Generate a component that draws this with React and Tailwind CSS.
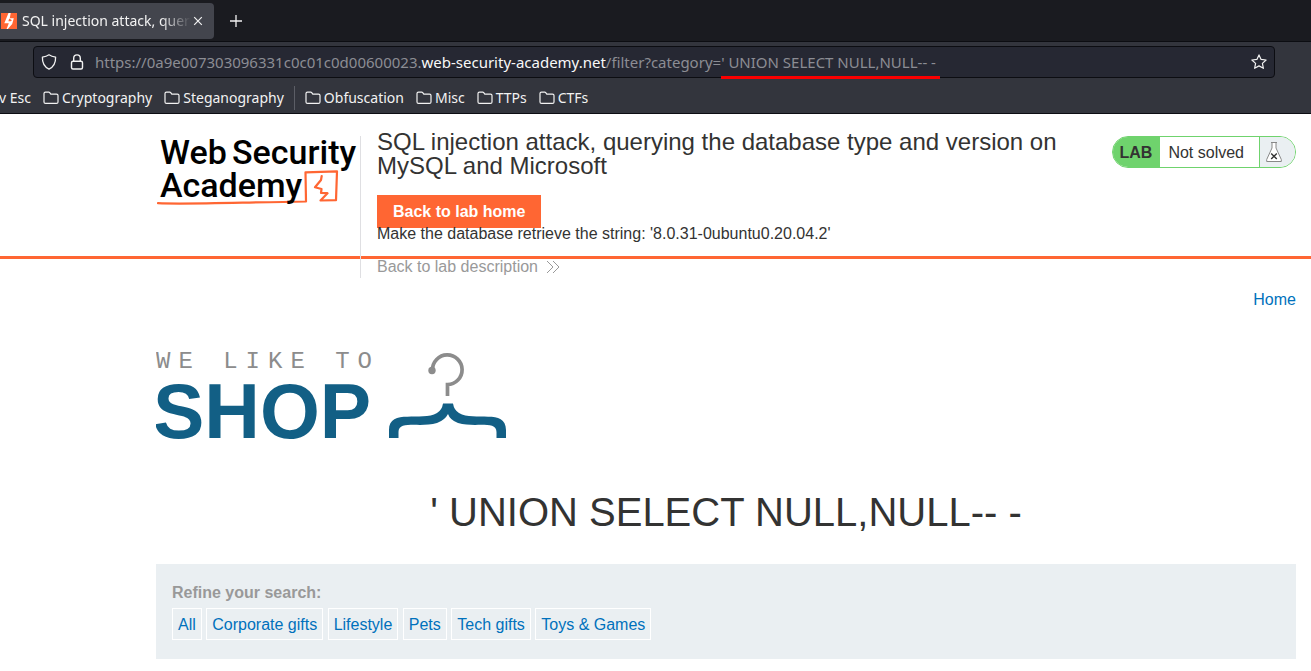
import React from 'react';

const folders = ['Cryptography', 'Steganography'];
const moreFolders = ['Obfuscation', 'Misc', 'TTPs', 'CTFs'];
const categories = ['All', 'Corporate gifts', 'Lifestyle', 'Pets', 'Tech gifts', 'Toys & Games'];
const urlHost = 'https://0a9e007303096331c0c01c0d00600023.';
const urlDomain = 'web-security-academy.net';
const urlPath = '/filter?category=';
const urlQuery = "' UNION SELECT NULL,NULL-- -";

function Folder({ name }) {
  return (
    <a href="#" className="flex items-center gap-[3px]">
      <svg width="16" height="16" viewBox="0 0 16 16" fill="none" stroke="currentColor" strokeWidth="1.2" strokeLinejoin="round">
        <path d="M1 3.600q0-1.500 1.500-1.500h3.200q.6 0 1 .5l1.100 1.500h5.700q1.500 0 1.500 1.500v6.300q0 1.500-1.500 1.500H2.500q-1.500 0-1.500-1.500z" />
      </svg>
      {name}
    </a>
  );
}

function Browser() {
  return (
    <div className="bg-[#33353d] font-['Noto_Sans',sans-serif] text-[14px] text-[#f2f2f2]">
      <div className="flex h-[42px] items-center border-b border-[#0c0d12] bg-[#1a1b20]">
        <div className="flex h-9 w-[214px] items-center rounded-r-[4px] bg-[#43454d]">
          <svg className="ml-px shrink-0" width="16" height="16" viewBox="0 0 16 16">
            <path fill="#ff6633" d="M0 0h16v16H0z" />
            <path fill="#fff" d="M7.500 0h2.200L8.800 5.200h4L11.200 11 6.800 16H5.600l2.200-5.800H3.300z" />
            <path fill="#ff6633" d="M7.400 8.200l.8-2.600 2.800 1.600-1.400 1z" />
          </svg>
          <span className="ml-[5px] w-[169px] overflow-hidden whitespace-nowrap [mask-image:linear-gradient(to_right,black_82%,transparent)]">
            SQL injection attack, querying
          </span>
          <button aria-label="Close tab" className="ml-[2px]">
            <svg width="10" height="10" viewBox="0 0 10 10" stroke="currentColor" strokeWidth="1.2">
              <path d="M1.200 1.200l7.600 7.600M8.800 1.200L1.200 8.800" />
            </svg>
          </button>
        </div>
        <button aria-label="New tab" className="ml-4">
          <svg width="12" height="12" viewBox="0 0 12 12" stroke="currentColor" strokeWidth="1.3">
            <path d="M6 0v12M0 6h12" />
          </svg>
        </button>
      </div>
      <div className="pt-1 pr-9 pl-[33px]">
        <div className="flex h-8 items-center rounded-[4px] border border-[#0c0d12] bg-[#262833] px-[7px] text-[15px]">
          <svg width="16" height="16" viewBox="0 0 16 16" fill="none" stroke="currentColor" strokeWidth="1.3" strokeLinejoin="round">
            <path d="M8 .8c2 1.400 4.200 2 6.600 2.300.2 5.200-1.800 9.800-6.600 12.100C3.200 12.900 1.200 8.300 1.400 3.100 3.800 2.800 6 2.200 8 .8z" />
          </svg>
          <svg className="ml-3" width="16" height="16" viewBox="0 0 16 16" fill="none" stroke="currentColor" strokeWidth="1.4">
            <rect x="2.500" y="7.200" width="11" height="7.800" rx="1.500" />
            <path d="M4.700 7V4.200a3.300 3.300 0 0 1 6.600 0V7" />
          </svg>
          <div className="ml-[10px] grid flex-1 items-center">
            <input
              aria-label="Address"
              defaultValue={urlHost + urlDomain + urlPath + urlQuery}
              className="col-start-1 row-start-1 w-full bg-transparent text-transparent outline-none"
            />
            <div aria-hidden="true" className="pointer-events-none col-start-1 row-start-1 whitespace-nowrap text-[#8c8d94]">
              {urlHost}
              <span className="text-[#f8f8f8]">{urlDomain}</span>
              {urlPath}
              <span className="relative">
                {urlQuery}
                <span className="absolute top-[24px] -right-1 left-0 h-[3px] bg-[#fa0000]" />
              </span>
            </div>
          </div>
          <button aria-label="Bookmark this page">
            <svg width="16" height="16" viewBox="0 0 16 16" fill="none" stroke="currentColor" strokeWidth="1.2" strokeLinejoin="round">
              <path d="M8 .9l2.100 4.500 5 .6-3.700 3.400 1 4.900L8 11.900l-4.400 2.400 1-4.900L.9 6l5-.6z" />
            </svg>
          </button>
        </div>
      </div>
      <nav aria-label="Bookmarks" className="flex h-9 items-center gap-3 overflow-hidden border-b border-[#0c0d12] pt-1">
        <a href="#" className="-ml-px">v Esc</a>
        {folders.map((f) => <Folder key={f} name={f} />)}
        <span className="-mx-[2px] h-6 w-px bg-[#5c5e66]" />
        {moreFolders.map((f) => <Folder key={f} name={f} />)}
      </nav>
    </div>
  );
}

function AcademyLogo() {
  return (
    <svg width="204" height="76" viewBox="0 0 204 76" role="img" aria-label="Web Security Academy">
      <g fill="none" stroke="#ff6633" strokeWidth="2.200" strokeLinejoin="round" strokeLinecap="round">
        <path d="M2 67.200C30 68.500 80 66.500 150 65.500L149.500 36.300l31.500-1-1 28.800-15.500.4 7-7.300-6.500-.2.500-4-6.500-1.700 6-7.300.7-4" />
      </g>
      <g className="font-['Roboto',sans-serif] text-[34px] font-medium" fill="#000">
        <text x="4" y="28">Web</text>
        <text x="76" y="28">Security</text>
        <text x="4" y="61">Academy</text>
      </g>
    </svg>
  );
}

function LabHeader() {
  return (
    <header className="flex h-[145px] items-start border-b-[3px] border-[#ff6633] pt-[22px] pr-[15px] pl-[156px]">
      <a href="#" className="shrink-0"><AcademyLogo /></a>
      <div className="max-w-[717px] flex-1 border-l border-[#dfdfe2] pl-4">
        <h1 className="-mt-[6px] text-[24px] leading-6">
          SQL injection attack, querying the database type and version on MySQL and Microsoft
        </h1>
        <div className="mt-[23px] leading-[22px]">
          <a href="#" className="bg-[#ff6633] px-4 py-2 font-bold text-white">Back to lab home</a>
        </div>
        <p className="leading-[22px]">Make the database retrieve the string: '8.0.31-0ubuntu0.20.04.2'</p>
        <a href="#" className="mt-[11px] flex items-center gap-2 leading-[22px] text-[#999999]">
          Back to lab description
          <svg width="14" height="14" viewBox="0 0 14 14" fill="none" stroke="#999999">
            <path d="M1 1l6 6-6 6M7 1l6 6-6 6" />
          </svg>
        </a>
      </div>
      <div className="ml-auto flex h-8 shrink-0 overflow-hidden rounded-full border border-[#6fd36d] leading-[32px]">
        <span className="bg-[#6fd36d] pr-2 pl-[7px] font-bold">LAB</span>
        <span className="pr-[15px] pl-2">Not solved</span>
        <span className="flex w-9 items-center border-l border-[#6fd36d] bg-[#eaeff2] pl-[6px]">
          <svg width="16" height="20" viewBox="0 0 16 20" fill="none">
            <path d="M5 .5h6M6 .5v5.500L.7 17.500v2h14.600v-2L10 6V.5" fill="#fff" stroke="#888" />
            <path d="M5.200 11.500l5.600 5.500M10.800 11.500L5.200 17" stroke="#333" strokeWidth="1.400" />
          </svg>
        </span>
      </div>
    </header>
  );
}

function ShopLogo() {
  return (
    <svg width="352" height="92" viewBox="0 0 352 92" role="img" aria-label="We like to shop">
      <text x="0" y="18" fill="#8c8c8c" className="font-['Liberation_Mono',monospace] text-[24px] tracking-[8px]">WE LIKE TO</text>
      <text x="-3" y="88" fill="#125f85" className="text-[77px] font-bold">SHOP</text>
      <path d="M276.500 20a14.800 14.800 0 1 1 15 14.500V46" fill="none" stroke="#8c8c8c" strokeWidth="3.700" />
      <circle cx="276" cy="20.500" r="3.700" fill="#8c8c8c" />
      <path d="M233 88V80C233 58 266 72 281 63Q286 60 287 53.500h10Q298 60 303 63C318 72 350 58 350 80V88H340.500V82C340.500 70 318 78 302 73Q294 70 292 64Q289 70 281 73C265 78 242.500 70 242.500 82V88z" fill="#125f85" />
    </svg>
  );
}

export default function App() {
  return (
    <div className="bg-white font-['Liberation_Sans',sans-serif] text-[16px] text-[#333332]">
      <Browser />
      <LabHeader />
      <main className="pr-[15px] pl-[156px]">
        <nav className="flex justify-end pt-[29px] leading-6">
          <a href="#" className="text-[#0071bc]">Home</a>
        </nav>
        <div className="mt-[38px]"><ShopLogo /></div>
        <h2 className="mt-[47px] text-center text-[40px] leading-[46px]">{urlQuery}</h2>
        <section className="mt-[29px] bg-[#eaeff2] px-4 pt-[17px] pb-[19px]">
          <h3 className="leading-6 font-bold text-[#999999]">Refine your search:</h3>
          <div className="mt-[3px] leading-[29px]">
            {categories.map((c) => (
              <React.Fragment key={c}>
                <a href="#" className="inline-block border border-white px-[5px] pt-px text-[#0071bc]">{c}</a>{' '}
              </React.Fragment>
            ))}
          </div>
        </section>
      </main>
    </div>
  );
}
